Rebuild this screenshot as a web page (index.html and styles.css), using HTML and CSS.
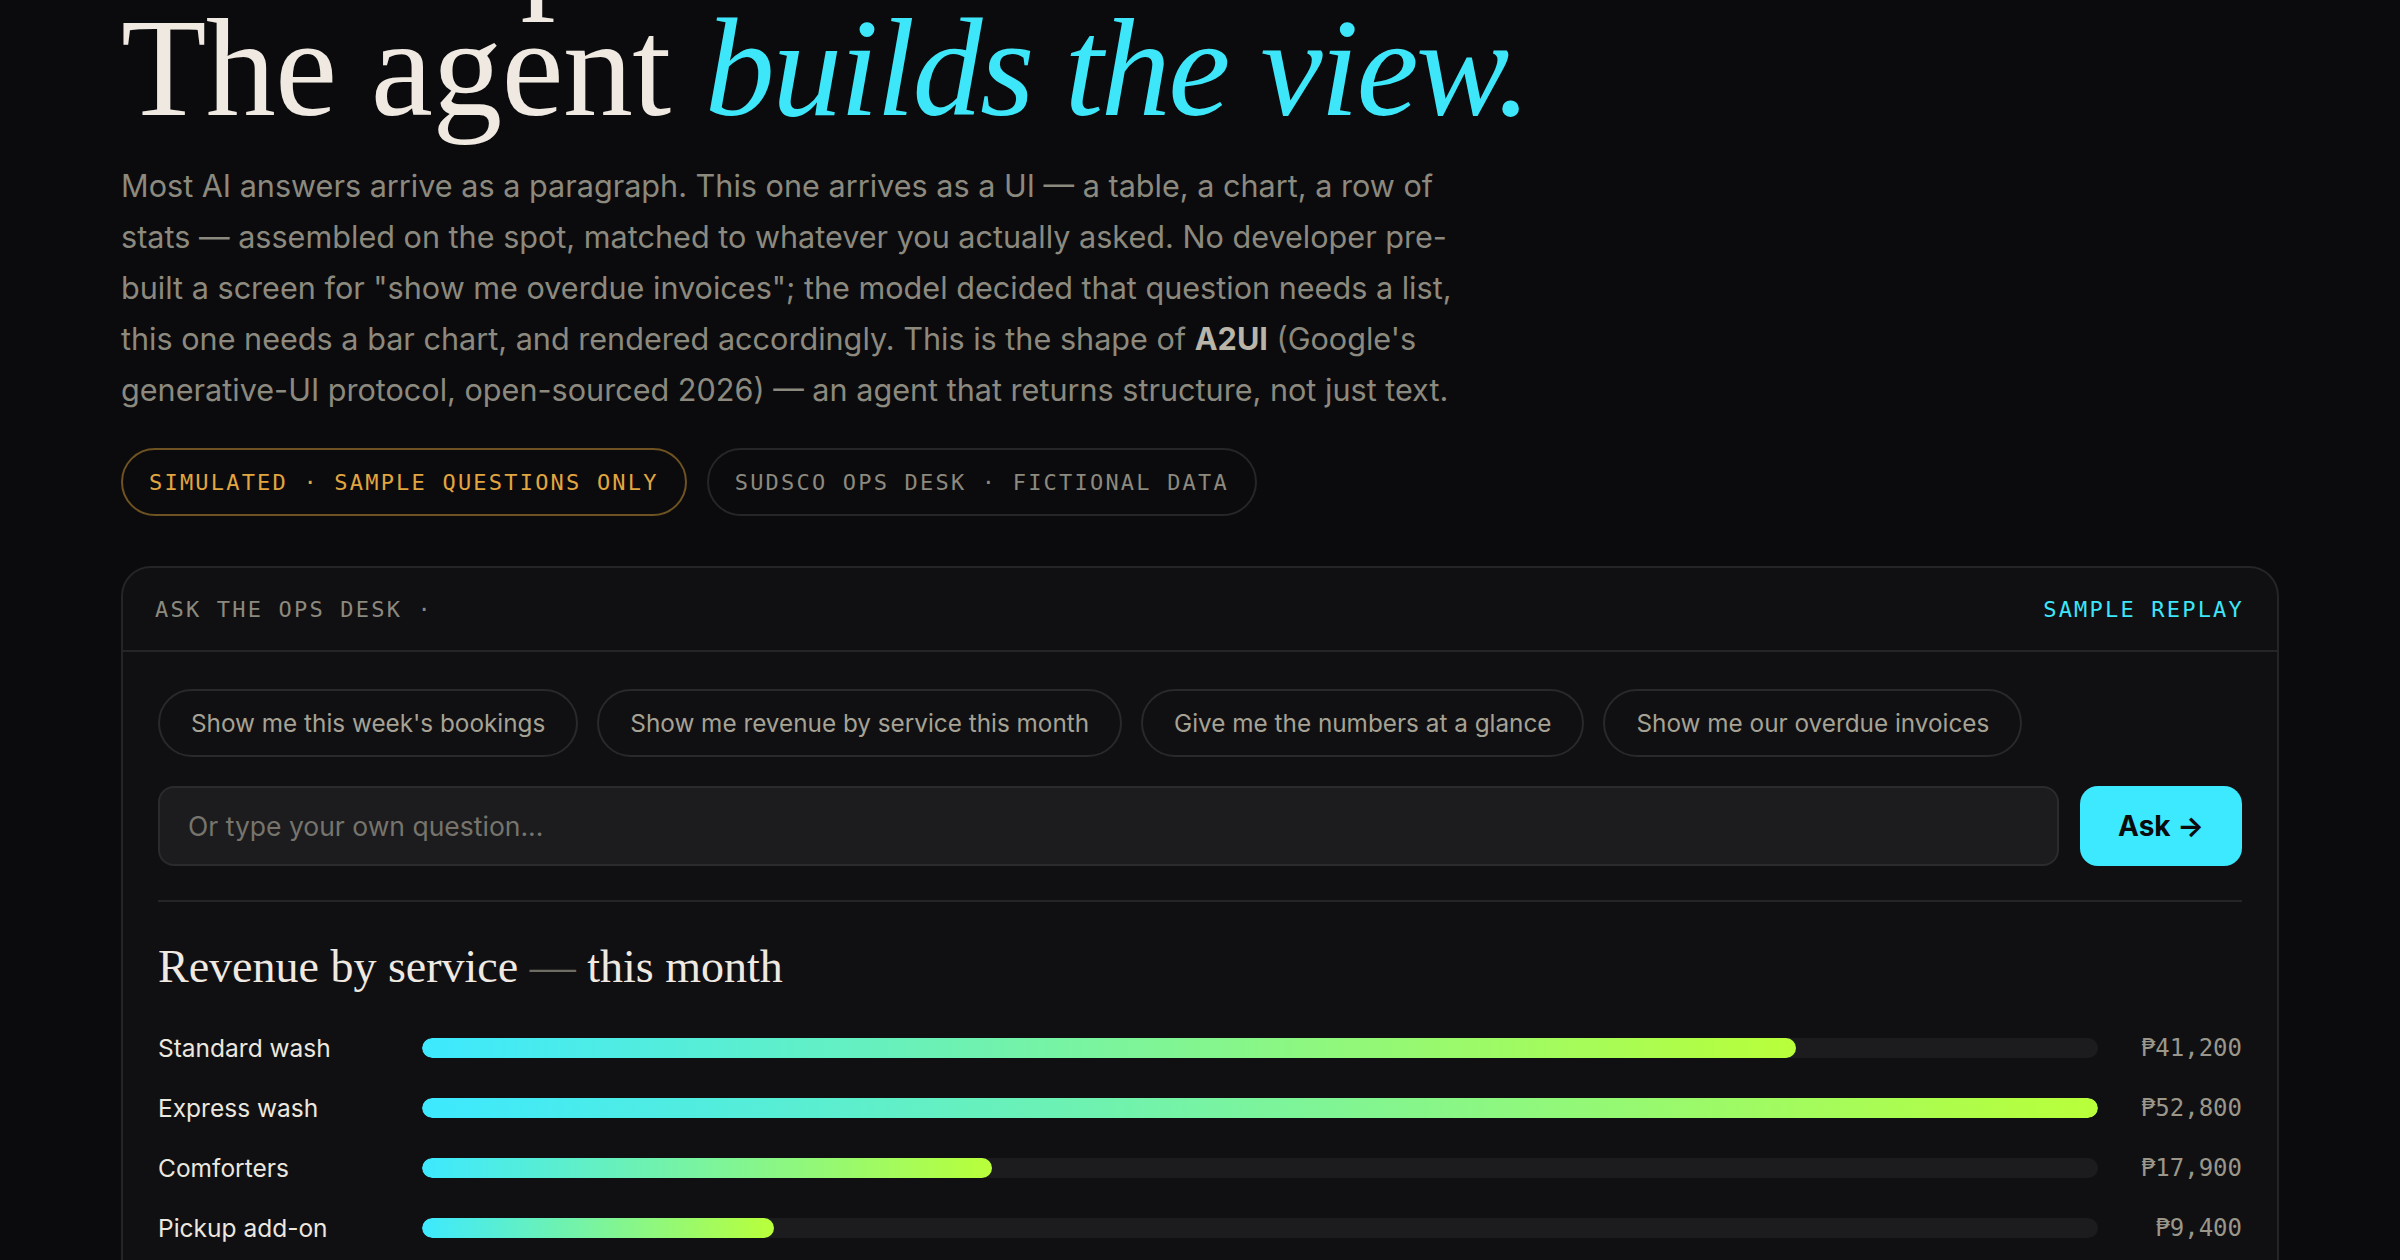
FILE: index.html
```html
<!DOCTYPE html>
<html lang="en">
<head>
<meta charset="utf-8">
<title>The agent builds the view</title>
<link rel="stylesheet" href="styles.css">
</head>
<body>
<main class="page">
  <h1 class="hero-title">
    <span class="line">Ask in plain words.</span>
    <span class="line">The agent <em class="accent">builds the view.</em></span>
  </h1>
  <p class="lede">Most AI answers arrive as a paragraph. This one arrives as a UI — a table, a chart, a row of stats — assembled on the spot, matched to whatever you actually asked. No developer pre-built a screen for "show me overdue invoices"; the model decided that question needs a list, this one needs a bar chart, and rendered accordingly. This is the shape of <strong>A2UI</strong> (Google's generative-UI protocol, open-sourced 2026) — an agent that returns structure, not just text.</p>
  <div class="badges">
    <span class="badge badge-gold">SIMULATED · SAMPLE QUESTIONS ONLY</span>
    <span class="badge">SUDSCO OPS DESK · FICTIONAL DATA</span>
  </div>

  <section class="desk">
    <header class="desk-head">
      <span class="desk-label">ASK THE OPS DESK ·</span>
      <span class="desk-mode">SAMPLE REPLAY</span>
    </header>
    <div class="desk-body">
      <div class="chips">
        <button class="chip">Show me this week's bookings</button>
        <button class="chip">Show me revenue by service this month</button>
        <button class="chip">Give me the numbers at a glance</button>
        <button class="chip">Show me our overdue invoices</button>
      </div>
      <form class="ask-row">
        <input class="ask-input" type="text" placeholder="Or type your own question...">
        <button class="ask-btn" type="button">Ask →</button>
      </form>
      <div class="result">
        <h2 class="result-title">Revenue by service <span class="dash">—</span> this month</h2>
        <div class="bars">
          <div class="bar-row">
            <span class="bar-label">Standard wash</span>
            <div class="track"><div class="fill" style="width:82%"></div></div>
            <span class="bar-value">₱41,200</span>
          </div>
          <div class="bar-row">
            <span class="bar-label">Express wash</span>
            <div class="track"><div class="fill" style="width:100%"></div></div>
            <span class="bar-value">₱52,800</span>
          </div>
          <div class="bar-row">
            <span class="bar-label">Comforters</span>
            <div class="track"><div class="fill" style="width:34%"></div></div>
            <span class="bar-value">₱17,900</span>
          </div>
          <div class="bar-row">
            <span class="bar-label">Pickup add-on</span>
            <div class="track"><div class="fill" style="width:21%"></div></div>
            <span class="bar-value">₱9,400</span>
          </div>
          <div class="bar-row">
            <span class="bar-label">Dry clean</span>
            <div class="track"><div class="fill" style="width:28%"></div></div>
            <span class="bar-value">₱14,600</span>
          </div>
        </div>
      </div>
    </div>
  </section>
</main>
</body>
</html>
```

FILE: styles.css
```css
* { box-sizing: border-box; }

html, body {
  margin: 0;
  padding: 0;
  background: #0b0b0d;
  overflow: hidden;
}

body {
  font-family: Inter, "Noto Sans", "Liberation Sans", sans-serif;
  color: #ece7df;
}

.page {
  width: 2158px;
  margin: -117px auto 0;
  display: flex;
  flex-direction: column;
}

.hero-title {
  margin: 0;
  font-family: "Liberation Serif", "DejaVu Serif", serif;
  font-weight: 400;
  font-size: 140px;
  line-height: 123px;
  color: #efe9e1;
  letter-spacing: -0.005em;
}

.hero-title .line { display: block; white-space: nowrap; }

.accent {
  font-style: italic;
  color: #3ee6fa;
  letter-spacing: -0.018em;
}

.lede {
  margin: 31px 0 0;
  max-width: 1345px;
  font-size: 30.6px;
  line-height: 51px;
  color: #8c897e;
}

.lede strong {
  font-weight: 700;
  color: #b9b5a9;
}

.badges {
  display: flex;
  gap: 20px;
  margin-top: 33px;
}

.badge {
  display: inline-flex;
  align-items: center;
  height: 68px;
  padding: 0 26px;
  border: 2px solid #262628;
  border-radius: 999px;
  font-family: "DejaVu Sans Mono", "Liberation Mono", monospace;
  font-size: 22px;
  letter-spacing: 0.1em;
  color: #8c897e;
}

.badge-gold {
  border-color: #6e5222;
  color: #e2a640;
}

.desk {
  margin-top: 50px;
  background: #101013;
  border: 2px solid #252528;
  border-radius: 30px;
}

.desk-head {
  height: 84px;
  padding: 0 33px 0 32px;
  display: flex;
  align-items: center;
  justify-content: space-between;
  border-bottom: 2px solid #252528;
  font-family: "DejaVu Sans Mono", "Liberation Mono", monospace;
  font-size: 22px;
  letter-spacing: 0.1em;
}

.desk-label { color: #8c897e; }
.desk-mode { color: #3ee6fa; }

.desk-body {
  padding: 37px 35px 40px;
}

.chips {
  display: flex;
  gap: 19px;
}

.chip {
  height: 68px;
  padding: 0 31px;
  background: transparent;
  border: 2px solid #29292c;
  border-radius: 999px;
  font-family: Inter, "Noto Sans", sans-serif;
  font-size: 24.3px;
  color: #a6a294;
}

.ask-row {
  display: flex;
  gap: 21px;
  margin: 29px 0 0;
}

.ask-input {
  flex: 1;
  height: 80px;
  padding: 0 28px;
  background: #1c1c1f;
  border: 2px solid #2b2b2e;
  border-radius: 16px;
  font-family: Inter, "Noto Sans", sans-serif;
  font-size: 26.5px;
  color: #ece7df;
  outline: none;
}

.ask-input::placeholder { color: #76746c; }

.ask-btn {
  width: 162px;
  height: 80px;
  border: 0;
  border-radius: 18px;
  background: #3de9ff;
  font-family: Inter, "Noto Sans", sans-serif;
  font-weight: 700;
  font-size: 28px;
  color: #0b0b0d;
}

.result {
  margin-top: 34px;
  border-top: 2px solid #252528;
  padding-top: 37px;
}

.result-title {
  margin: 0;
  font-family: "Liberation Serif", "DejaVu Serif", serif;
  font-weight: 400;
  font-size: 46px;
  line-height: 55px;
  color: #efe9e1;
}

.result-title .dash { color: #6f6c64; }

.bars {
  margin-top: 36px;
  display: flex;
  flex-direction: column;
  gap: 24px;
}

.bar-row {
  display: grid;
  grid-template-columns: 240px 1fr 120px;
  column-gap: 24px;
  align-items: center;
  height: 36px;
}

.bar-label {
  font-size: 24.5px;
  color: #ece7df;
  white-space: nowrap;
}

.track {
  height: 20px;
  border-radius: 10px;
  background: #1c1c1f;
  overflow: hidden;
}

.fill {
  height: 100%;
  border-radius: 10px;
  background: linear-gradient(90deg, #3de9ff 0%, #b9ff3a 100%);
}

.bar-value {
  text-align: right;
  font-family: "DejaVu Sans Mono", "Liberation Mono", monospace;
  font-size: 24px;
  color: #9a978a;
}
```
